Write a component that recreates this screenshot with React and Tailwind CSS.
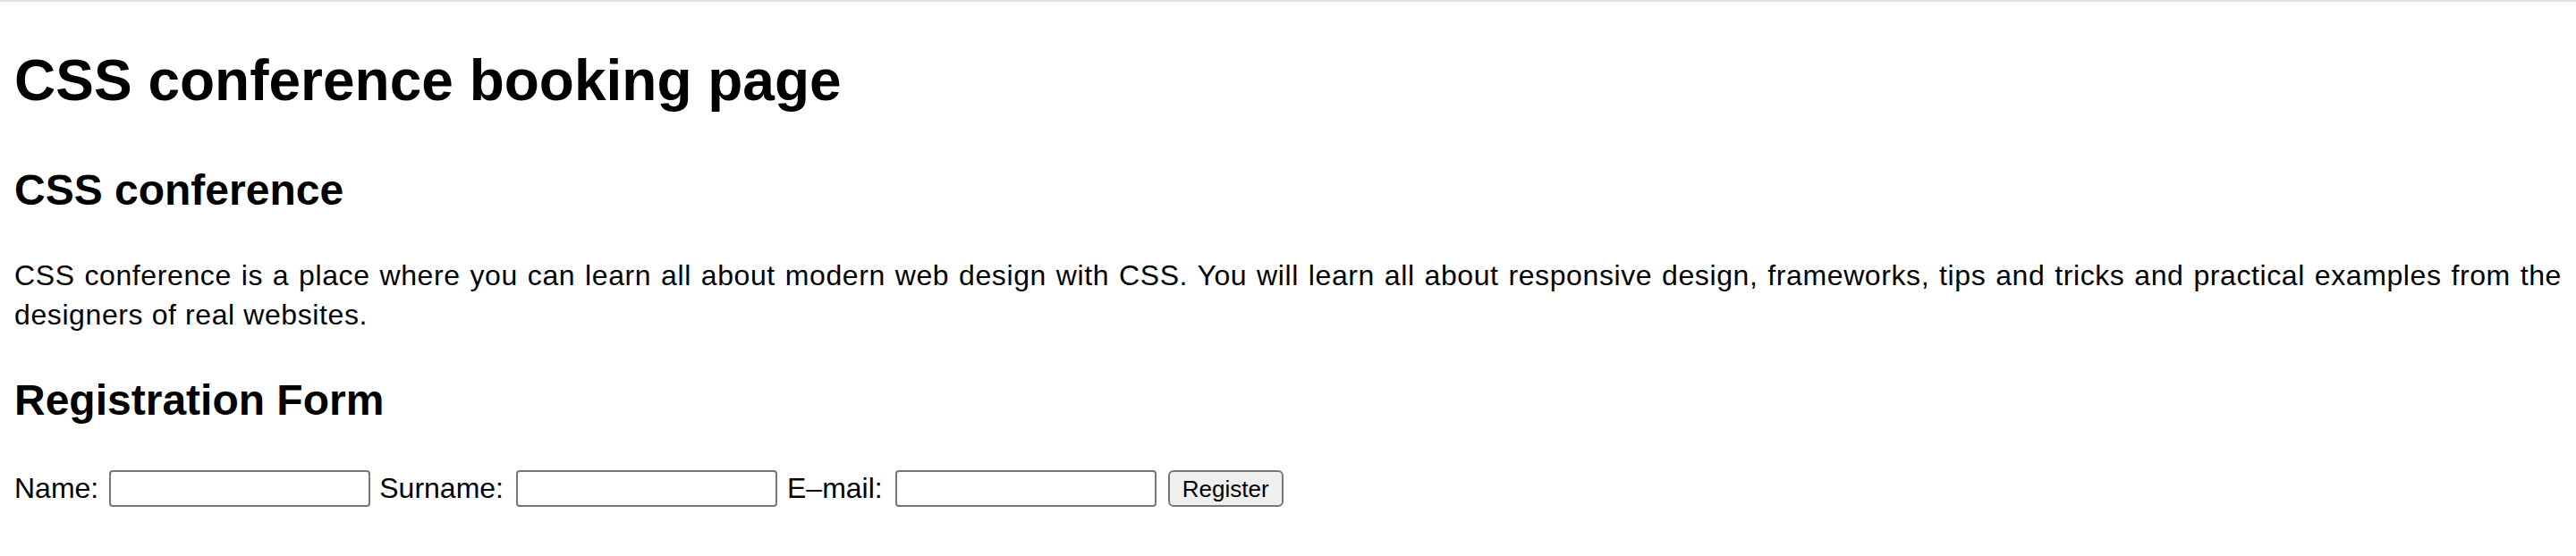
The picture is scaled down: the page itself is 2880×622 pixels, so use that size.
import React from "react";

export default function App() {
  return (
    <div className="min-h-[622px] w-full bg-white text-black font-['Liberation_Sans',Arial,sans-serif]">
      <div className="h-[2px] w-full bg-[#dedede]" />
      <div className="flex flex-col px-4">
        <h1 className="mt-[52px] text-[64px] leading-[72px] font-bold">
          CSS conference booking page
        </h1>
        <h2 className="mt-[59px] text-[48px] leading-[56px] font-bold">
          CSS conference
        </h2>
        <p className="mt-[45px] text-[32px] leading-[44px] text-justify tracking-[0.6px]">
          CSS conference is a place where you can learn all about modern web design with CSS. You will learn all about responsive design, frameworks, tips and tricks and practical examples from the designers of real websites.
        </p>
        <h2 className="mt-[46px] text-[48px] leading-[56px] font-bold">
          Registration Form
        </h2>
        <form
          className="mt-[50px] flex items-center text-[32px] leading-[41px]"
          onSubmit={(e) => e.preventDefault()}
        >
          <label htmlFor="name">Name:</label>
          <input
            id="name"
            type="text"
            className="ml-[12px] h-[41px] w-[292px] rounded-[4px] border-2 border-[#767676] bg-white"
          />
          <label htmlFor="surname" className="ml-[10px]">Surname:</label>
          <input
            id="surname"
            type="text"
            className="ml-[14px] h-[41px] w-[292px] rounded-[4px] border-2 border-[#767676] bg-white"
          />
          <label htmlFor="email" className="ml-[11px]">E–mail:</label>
          <input
            id="email"
            type="email"
            className="ml-[14px] h-[41px] w-[292px] rounded-[4px] border-2 border-[#767676] bg-white"
          />
          <button
            type="submit"
            className="ml-[13px] flex h-[41px] w-[129px] items-center justify-center rounded-[6px] border-2 border-[#767676] bg-[#efefef] text-[26px] leading-none"
          >
            Register
          </button>
        </form>
      </div>
    </div>
  );
}
